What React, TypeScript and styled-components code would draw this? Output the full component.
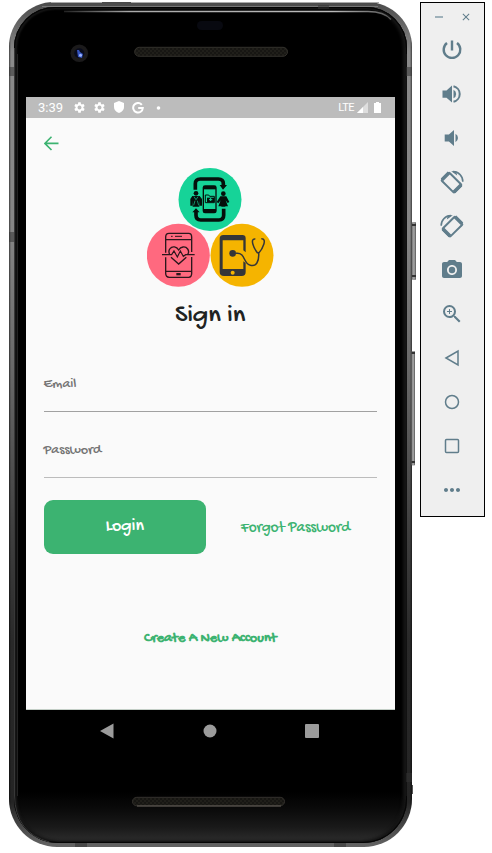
import React from 'react';
import styled, { createGlobalStyle } from 'styled-components';
import {
  MdCameraAlt, MdZoomIn, MdMoreHoriz, MdSettings, MdClose,
} from 'react-icons/md';

const GlobalStyle = createGlobalStyle`
  * { box-sizing: border-box; }
  body { margin: 0; background: #fff; overflow: hidden; }
  button { border: 0; padding: 0; background: none; font: inherit; color: inherit; }
`;

const handwriting = '"Gochi Hand", "Indie Flower", "Lato", sans-serif';

const Page = styled.main`
  width: 492px;
  height: 853px;
  display: flex;
  align-items: flex-start;
  padding: 2px 0 0 9px;
`;

const Phone = styled.section`
  position: relative;
  width: 403px;
  height: 845px;
  flex: none;
  padding: 5px 5px 4px;
  border-radius: 45px 45px 48px 48px;
  background:
    linear-gradient(90deg, #0008 0, transparent 2px, transparent 401px, #0008 403px),
    linear-gradient(#4a4a4a 0, #8a8a8a 50px, #858585 230px, #686868 370px, #414141 520px, #292929 640px, #242424 800px, #626262 843px);
`;

const Face = styled.div`
  height: 100%;
  padding: 0 12px;
  border-radius: 41px 41px 44px 44px;
  box-shadow: inset 0 0 0 1px #050505, inset 1px 0 2px 2px #171717, inset -2px 0 3px 2px #151515;
  background: linear-gradient(#000 785px, #0b0b0b 803px, #191919 820px, #2c2c2c 834px, #080808 835px);
`;

const TopBezel = styled.div`
  height: 90px;
`;

const Hardware = styled.svg`
  position: absolute;
  left: -9px;
  top: -2px;
  width: 420px;
  height: 853px;
  pointer-events: none;
`;

const Screen = styled.div`
  width: 369px;
  height: 613px;
  display: flex;
  flex-direction: column;
  background: #fafafa;
  border-bottom: 1px solid #c3cec6;
`;

const StatusBar = styled.header`
  height: 21px;
  flex: none;
  display: flex;
  align-items: center;
  justify-content: space-between;
  padding: 0 12px;
  background: #bcbcbc;
  color: #fff;
`;

const StatusGroup = styled.div<{ $gap: number }>`
  display: flex;
  align-items: center;
  gap: ${p => p.$gap}px;
  svg { display: block; }
`;

const Clock = styled.span`
  width: 24.5px;
  margin-right: 3px;
  font: 400 13px/21px Roboto, sans-serif;
`;

const Network = styled.span`
  font: 400 11px/20px Roboto, sans-serif;
  letter-spacing: -0.5px;
`;

const Content = styled.div`
  display: flex;
  flex-direction: column;
  padding: 18px 18px 0 17.5px;
  font-family: ${handwriting};
`;

const BackButton = styled.button`
  width: 15px;
  height: 15px;
  svg { display: block; }
`;

const Logo = styled.svg`
  display: block;
  width: 127px;
  height: 119px;
  margin: 17px auto 0;
`;

const Title = styled.h1`
  margin: 13px 0 0;
  text-align: center;
  font-size: 26.5px;
  line-height: 34px;
  font-weight: 400;
  color: #202322;
`;

const Field = styled.label<{ $first?: boolean }>`
  height: ${p => (p.$first ? 78 : 66)}px;
  display: flex;
  align-items: flex-end;
  padding-bottom: 17px;
  border-bottom: 1px solid ${p => (p.$first ? '#a1a1a1' : '#bcbcbc')};
  color: #747474;
  font-size: 14.2px;
  line-height: 18px;
`;

const Actions = styled.div`
  display: flex;
  margin-top: 22px;
`;

const LoginButton = styled.button`
  width: 162.5px;
  height: 54px;
  border-radius: 9px;
  background: #3cb371;
  color: #fff;
  font-size: 18px;
  padding-bottom: 2px;
`;

const TextLink = styled.button<{ $bold?: boolean }>`
  flex: 1;
  color: #3cb371;
  font-size: ${p => (p.$bold ? 14.3 : 15.2)}px;
  font-weight: ${p => (p.$bold ? 700 : 400)};
  line-height: 20px;
  padding: ${p => (p.$bold ? '0' : '2px')} 0 0 8px;
`;

const CreateRow = styled.div`
  display: flex;
  margin: 75px 8px 0 0;
`;

const NavBar = styled.nav`
  height: 42px;
  display: flex;
  justify-content: space-between;
  align-items: center;
  padding: 0 76px 0 74px;
  svg { display: block; }
`;

const Tools = styled.aside`
  width: 65px;
  height: 515px;
  flex: none;
  margin-left: 8px;
  border: 1px solid #000;
  background: #efefef;
  color: #607d8b;
`;

const WindowButtons = styled.div`
  display: flex;
  height: 25px;
  padding: 3px 12px 0 14px;
  align-items: center;
  justify-content: space-between;
`;

const ToolButton = styled.button`
  display: flex;
  width: 62px;
  height: 44px;
  align-items: center;
  justify-content: center;
`;

const Minus = styled.span`
  width: 8px;
  height: 2px;
  background: #9fb1ba;
`;

const VolumeIcon = ({ loud }: { loud?: boolean }) => (
  <svg width="24" height="24" viewBox="0 0 24 24" fill="currentColor">
    {loud ? (
      <>
        <path d="M2.5 8.4h4L12 3.5v17l-5.5-4.8h-4z" />
        <path d="M13.5 7.7a4.8 4.8 0 0 1 0 8.6z" />
        <path d="M13.5 4.2a8 8 0 0 1 0 15.6" fill="none" stroke="currentColor" strokeWidth="2" />
      </>
    ) : (
      <>
        <path d="M4.7 8.5h4.2L14 3.9v16.2l-5.1-4.6H4.7z" />
        <path d="M15.5 7.8a4.8 4.8 0 0 1 0 8.4z" />
      </>
    )}
  </svg>
);

const RotateIcon = ({ flip }: { flip?: boolean }) => (
  <svg width="26" height="26" viewBox="0 0 26 26">
    <g transform={flip ? 'translate(25 0) scale(-1 1)' : 'translate(1 0)'} fill="none" stroke="currentColor">
      <path d="M2 10.6 8.5 4.2a1 1 0 0 1 1.4 0L21 15.3a1 1 0 0 1 0 1.4l-6.3 6.4a1 1 0 0 1-1.4 0L2 12a1 1 0 0 1 0-1.4z" strokeWidth="2" />
      <path d="m2 10.8 7-7M14 23l7-7" strokeWidth="3.6" />
      <path d="M13 2.6a9.8 9.8 0 0 1 9.8 10.2" strokeWidth="1.5" />
      <path d="m11.2 2.2 5-.2 1 4.4z" fill="currentColor" stroke="none" />
    </g>
  </svg>
);

const DeviceHardware = () => (
  <Hardware viewBox="0 0 420 853">
    <defs>
      <linearGradient id="edge"><stop stopColor="#222" /><stop offset=".2" stopColor="#aaa" /><stop offset=".82" stopColor="#bbb" /><stop offset="1" stopColor="#555" /></linearGradient>
      <linearGradient id="side"><stop stopColor="#777" /><stop offset=".5" stopColor="#aaa" /><stop offset="1" stopColor="#555" /></linearGradient>
      <pattern id="mesh" width="4" height="4" patternUnits="userSpaceOnUse"><rect width="4" height="4" fill="#171613" /><path d="M0 1h2M2 3h2" stroke="#292721" /></pattern>
    </defs>
    <path d="M51 2.5h51m29 0h248" stroke="#aaa" />
    <path d="M42 6.5h336" stroke="#777" />
    <path d="M64 11.5h304q16 0 23 8" fill="none" stroke="url(#edge)" strokeWidth="1.5" />
    <path d="M14.5 48v748q1 37 35 46" fill="none" stroke="#383838" />
    <path d="M17.5 54v742" stroke="#222" />
    <path d="M406.5 54v742" stroke="#111" />
    <path d="M9 67h6v9H9zm0 165h6v10H9zM406 67h6v9h-6zM406 773h6v9h-6zM318 5h11v4h-11zM75 843h12v4H75zM334 843h12v4h-12z" fill="#3338" />
    <rect x="197" y="21" width="26" height="9" rx="4.5" fill="#080910" />
    <circle cx="79.3" cy="53.3" r="8.8" fill="#1b1a1b" />
    <circle cx="79.3" cy="53.3" r="5" fill="#080b1c" />
    <path d="m77 50 2 0 1 2 3 2-1 4-4-1z" fill="#3453bc" />
    <circle cx="80.5" cy="55.2" r="1.5" fill="#9db5ff" />
    <rect x="134.7" y="47.3" width="152.8" height="9" rx="4.5" fill="url(#mesh)" stroke="#33312c" />
    <rect x="132.5" y="797.3" width="152" height="8.5" rx="4.3" fill="url(#mesh)" stroke="#34312d" />
    <path d="M137 806h144" stroke="#66605a" />
    <rect x="412" y="222" width="4" height="58" rx="1" fill="url(#side)" />
    <rect x="411.5" y="351" width="3.5" height="114.5" rx="1" fill="url(#side)" />
    <path d="M412 225h4m-4 51h4m-4.5 77h3.5m-3.5 109h3.5" stroke="#333" strokeWidth="2" />
    <path d="M412.5 785v9" stroke="#555" />
  </Hardware>
);

const MedicalLogo = () => (
  <Logo viewBox="21 24 381 357">
    <circle cx="210" cy="118.5" r="94.5" fill="#16d398" />
    <circle cx="115" cy="286" r="94.5" fill="#ff697f" />
    <circle cx="306" cy="286" r="94.5" fill="#f5b400" />
    <g fill="none" stroke="#050f0b" strokeWidth="11">
      <path d="M166 89V71q0-14 15-14h54q15 0 15 14v9" />
      <path d="M168 155v11q0 14 14 14h55q14 0 14-14v-20" />
    </g>
    <g fill="#050f0b">
      <path d="m239 75 10 14 12-14zM157 157l11-12 11 12z" />
      <rect x="188" y="76" width="42" height="84" rx="7" />
      <path d="M192 88h34v59h-34z" fill="#16d398" />
      <path d="M196 105h10l3 4h14v19h-27z" fill="none" stroke="#050f0b" strokeWidth="3" />
      <path d="M201 113h22v14h-22z" />
      <path d="M212 114v9m-5-4h10" stroke="#16d398" strokeWidth="3" />
      <circle cx="168" cy="100" r="7" />
      <path d="M157 108h22l7 9v20h-7v-17l-1 20h-20l-1-20v17h-6v-20z" />
      <path d="m162 110 6 9 6-9m-9 12-4 14m11-14 4 14" stroke="#16d398" strokeWidth="2" fill="none" />
      <circle cx="250" cy="101" r="7" />
      <path d="M241 109h18l9 17-5 3-6-8 7 18h-8v1h-12v-1h-9l7-18-7 9-5-4z" />
    </g>
    <g fill="none" stroke="#2b171c" strokeWidth="4">
      <path d="M77 278v-47q0-11 10-11h59q9 0 9 11v45M77 292v48q0 12 11 12h58q9 0 9-12v-49M77 239h78M77 334h78" />
      <path d="M93 229h5m7 0h21" strokeWidth="3" />
      <path d="M111 341h9v3h-9z" fill="#2b171c" />
      <path d="m89 284q-5-11 1-18c7-9 20-6 26 4 6-10 20-13 27-3 5 7 3 12 0 17M93 292l23 20 23-20" />
      <path d="M66 284h29l7-11 10 18 9-18 9 16 7-5h27" strokeWidth="3.5" />
    </g>
    <path d="M250 225h57q10 0 10 10v42l-7-6v-30h-62v86h62v-23l7 5v27q0 12-12 12h-53q-13 0-13-12V236q0-11 11-11z" fill="#353638" />
    <circle cx="278" cy="338" r="6" fill="#f5b400" />
    <circle cx="278" cy="280" r="10" fill="#353638" />
    <g fill="none" stroke="#353638" strokeWidth="4.5">
      <path d="M288 280c29-4 21 32 43 36 17 4 27-10 25-38M346 237c-18-3-4 29 6 41h5c10-10 26-43 7-42" />
    </g>
  </Logo>
);

export default function App() {
  return (
    <Page>
      <GlobalStyle />
      <Phone>
        <Face>
          <TopBezel />
          <Screen>
            <StatusBar>
              <StatusGroup $gap={7}>
                <Clock>3:39</Clock>
                <MdSettings size={13} />
                <MdSettings size={13} />
                <svg width="12" height="13" viewBox="0 0 12 13"><path d="M6 0 11 2v4q0 4-5 6-5-2-5-6V2z" fill="#fff" /></svg>
                <svg width="12" height="12" viewBox="0 0 12 12"><path d="M9.8 2.8A4.8 4.8 0 1 0 10.8 6H6.2" fill="none" stroke="#fff" strokeWidth="2" /></svg>
                <svg width="12" height="12" viewBox="0 0 12 12"><circle cx="7.5" cy="6" r="1.8" fill="#fff" /></svg>
              </StatusGroup>
              <StatusGroup $gap={3}>
                <Network>LTE</Network>
                <svg width="26" height="13" viewBox="0 0 26 13"><path d="M0 12 11 1v11z" fill="#dedede" /><path d="m0 12 6-6v6z" fill="#fff" /><path d="M17 2h2V1h3v1h2v10h-7z" fill="#fff" /></svg>
              </StatusGroup>
            </StatusBar>
            <Content>
              <BackButton aria-label="Back">
                <svg width="15" height="15" viewBox="0 0 15 15"><path d="M7.5.8.9 7.4l6.6 6.6M1 7.4h13.5" fill="none" stroke="#3cb371" strokeWidth="1.6" /></svg>
              </BackButton>
              <MedicalLogo />
              <Title>Sign in</Title>
              <Field $first>Email</Field>
              <Field>Password</Field>
              <Actions>
                <LoginButton>Login</LoginButton>
                <TextLink>Forgot Password</TextLink>
              </Actions>
              <CreateRow><TextLink $bold>Create A New Account</TextLink></CreateRow>
            </Content>
          </Screen>
          <NavBar>
            <svg width="14" height="16" viewBox="0 0 14 16"><path d="M0 8 13.5.5v15z" fill="#9b9b9b" /></svg>
            <svg width="14" height="14" viewBox="0 0 14 14"><circle cx="7" cy="7" r="6.5" fill="#9b9b9b" /></svg>
            <svg width="14" height="14" viewBox="0 0 14 14"><rect width="14" height="14" rx="1" fill="#9b9b9b" /></svg>
          </NavBar>
        </Face>
        <DeviceHardware />
      </Phone>
      <Tools>
        <WindowButtons><Minus /><MdClose size={12} /></WindowButtons>
        <ToolButton aria-label="Power"><svg width="22" height="22" viewBox="0 0 22 22"><path d="M6 4a8.3 8.3 0 1 0 10 0M11 1.5v10" fill="none" stroke="currentColor" strokeWidth="2.4" /></svg></ToolButton>
        <ToolButton aria-label="Volume up"><VolumeIcon loud /></ToolButton>
        <ToolButton aria-label="Volume down"><VolumeIcon /></ToolButton>
        <ToolButton aria-label="Rotate left"><RotateIcon /></ToolButton>
        <ToolButton aria-label="Rotate right"><RotateIcon flip /></ToolButton>
        <ToolButton aria-label="Camera"><MdCameraAlt size={24} /></ToolButton>
        <ToolButton aria-label="Zoom"><MdZoomIn size={24} /></ToolButton>
        <ToolButton aria-label="Back"><svg width="16" height="18" viewBox="0 0 16 18"><path d="M2 9 14 2v14z" fill="none" stroke="currentColor" strokeWidth="1.5" /></svg></ToolButton>
        <ToolButton aria-label="Home"><svg width="16" height="16" viewBox="0 0 16 16"><circle cx="8" cy="8" r="6.5" fill="none" stroke="currentColor" strokeWidth="1.5" /></svg></ToolButton>
        <ToolButton aria-label="Overview"><svg width="16" height="16" viewBox="0 0 16 16"><rect x="1.5" y="1.5" width="13" height="13" rx="1" fill="none" stroke="currentColor" strokeWidth="1.5" /></svg></ToolButton>
        <ToolButton aria-label="More"><MdMoreHoriz size={24} /></ToolButton>
      </Tools>
    </Page>
  );
}
